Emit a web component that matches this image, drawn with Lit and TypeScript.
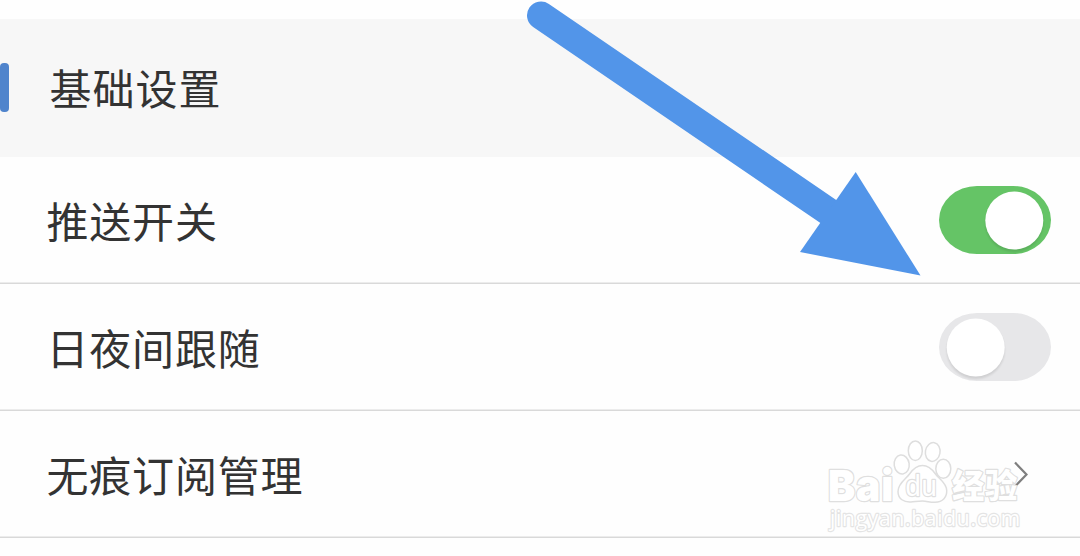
import { LitElement, html, css, svg } from "lit";
import { customElement, property } from "lit/decorators.js";

@customElement("app-switch")
export class AppSwitch extends LitElement {
  @property({ type: Boolean, reflect: true })
  on = false;

  static styles = css`
    :host {
      display: block;
      width: 112px;
      height: 68px;
    }

    .switch {
      display: block;
    }

    .track {
      fill: #e7e7e9;
    }

    .knob {
      fill: #fff;
    }

    .shade {
      fill: #000;
      opacity: 0.1;
    }

    :host([on]) .track {
      fill: #65c466;
    }
  `;

  render() {
    const cx = this.on ? 75.3 : 36.7;
    return html`
      <svg class="switch" width="112" height="68" viewBox="0 0 112 68">
        <defs>
          <clipPath id="track"><rect width="112" height="68" rx="38" ry="34" /></clipPath>
          <filter id="soft" x="-20%" y="-20%" width="140%" height="140%">
            <feGaussianBlur stdDeviation="0.8" />
          </filter>
        </defs>
        <rect class="track" width="112" height="68" rx="38" ry="34" />
        <g clip-path="url(#track)">
          <circle class="shade" cx=${cx} cy="37" r="29" filter="url(#soft)" />
        </g>
        <circle class="knob" cx=${cx} cy="34.5" r="29" />
      </svg>
    `;
  }
}

@customElement("app-watermark")
export class AppWatermark extends LitElement {
  static styles = css`
    :host {
      display: block;
    }

    .mark {
      display: block;
      overflow: visible;
    }

    .outline {
      fill: #fff;
      stroke: #dfdfdf;
      stroke-width: 2.4;
      stroke-linejoin: round;
      paint-order: stroke;
    }

    .toe,
    .pad {
      fill: #fff;
      stroke: #dedede;
      stroke-width: 1.5;
    }

    .latin {
      font: 900 43px Inter, "Liberation Sans", sans-serif;
    }

    .du {
      font: 400 29px "Liberation Sans", Arial, sans-serif;
    }

    .cjk {
      font: 900 33px "Noto Sans CJK SC", sans-serif;
    }

    .site {
      font: 400 22px "Open Sans", "Noto Sans", sans-serif;
      stroke: #e4e4e4;
    }
  `;

  render() {
    const toes = [
      [91.7, 39.5, 7.5, 9.5, -8],
      [105.3, 25.7, 7, 9.8, 0],
      [122.7, 27, 7.3, 9.5, 10],
      [133.3, 43.7, 7.5, 9.5, 0],
    ];
    return html`
      <svg class="mark" width="240" height="125" viewBox="0 0 240 125">
        <text class="outline latin" x="18" y="75.500" textLength="66" lengthAdjust="spacingAndGlyphs">Bai</text>
        ${toes.map(
          ([x, y, rx, ry, angle]) => svg`
            <ellipse class="toe" cx=${x} cy=${y} rx=${rx} ry=${ry}
              transform="rotate(${angle} ${x} ${y})" />
          `
        )}
        <path
          class="pad"
          d="M112.500 40.500C107 40.500 103 44 99.500 49C96 54 88 58 88 66.500C88 74 94 77.500 101 77C105 76.700 108 76 112.500 76C117 76 120 77.500 125 77.300C133 77 137 72 136.700 65.500C136.500 57.500 129 54 125.500 49C122 44 118.500 40.500 112.500 40.500Z"
        />
        <text class="outline du" x="95.500" y="71" textLength="32" lengthAdjust="spacingAndGlyphs">du</text>
        <text class="outline cjk" x="142" y="73" textLength="66" lengthAdjust="spacingAndGlyphs">经验</text>
        <text class="outline site" x="20" y="101" textLength="191" lengthAdjust="spacingAndGlyphs">jingyan.baidu.com</text>
      </svg>
    `;
  }
}

@customElement("app-root")
export class AppRoot extends LitElement {
  static styles = css`
    :host {
      display: block;
      position: relative;
      box-sizing: border-box;
      width: 1080px;
      height: 556px;
      padding-top: 19px;
      overflow: hidden;
      background: #fefefe;
      color: #333;
      font-family: "Noto Sans CJK SC", sans-serif;
      font-size: 42px;
      letter-spacing: 0.8px;
      line-height: 60px;
    }

    .section {
      display: flex;
      align-items: center;
      height: 138px;
      background: #f7f7f7;
    }

    .accent {
      width: 9px;
      height: 49px;
      margin-bottom: 2px;
      border-radius: 4px;
      background: #4f84cc;
    }

    .title {
      margin-left: 40.5px;
      padding-bottom: 2px;
      letter-spacing: 1px;
    }

    .row {
      display: flex;
      align-items: center;
      justify-content: space-between;
      box-sizing: border-box;
      height: 127px;
      padding: 0 29px 0 46.5px;
      border-bottom: 1px solid #d9d9d9;
      box-shadow: inset 0 -1px #ececec;
    }

    .label {
      padding-bottom: 1px;
    }

    .chevron {
      display: block;
      margin-right: 23px;
      fill: none;
      stroke: #7f7f7f;
      stroke-width: 2.2;
    }

    .pointer {
      position: absolute;
      left: 0;
      top: 0;
      fill: #5295e9;
    }

    .pointer-shaft {
      stroke: #5295e9;
      stroke-width: 28;
      stroke-linecap: round;
    }

    .watermark {
      position: absolute;
      left: 810px;
      top: 425px;
    }
  `;

  render() {
    return html`
      <div class="section">
        <div class="accent"></div>
        <div class="title">基础设置</div>
      </div>
      <div class="row">
        <div class="label">推送开关</div>
        <app-switch on></app-switch>
      </div>
      <div class="row">
        <div class="label">日夜间跟随</div>
        <app-switch></app-switch>
      </div>
      <div class="row">
        <div class="label">无痕订阅管理</div>
        <svg class="chevron" width="14" height="26" viewBox="0 0 14 26">
          <path d="M1 1.500L12.500 13.500L1 25.500" />
        </svg>
      </div>
      <svg class="pointer" width="1080" height="556" viewBox="0 0 1080 556">
        <line class="pointer-shaft" x1="541" y1="15.500" x2="832" y2="214" />
        <path d="M920.500 275.500L855.700 172L800 252Z" />
      </svg>
      <app-watermark class="watermark"></app-watermark>
    `;
  }
}
